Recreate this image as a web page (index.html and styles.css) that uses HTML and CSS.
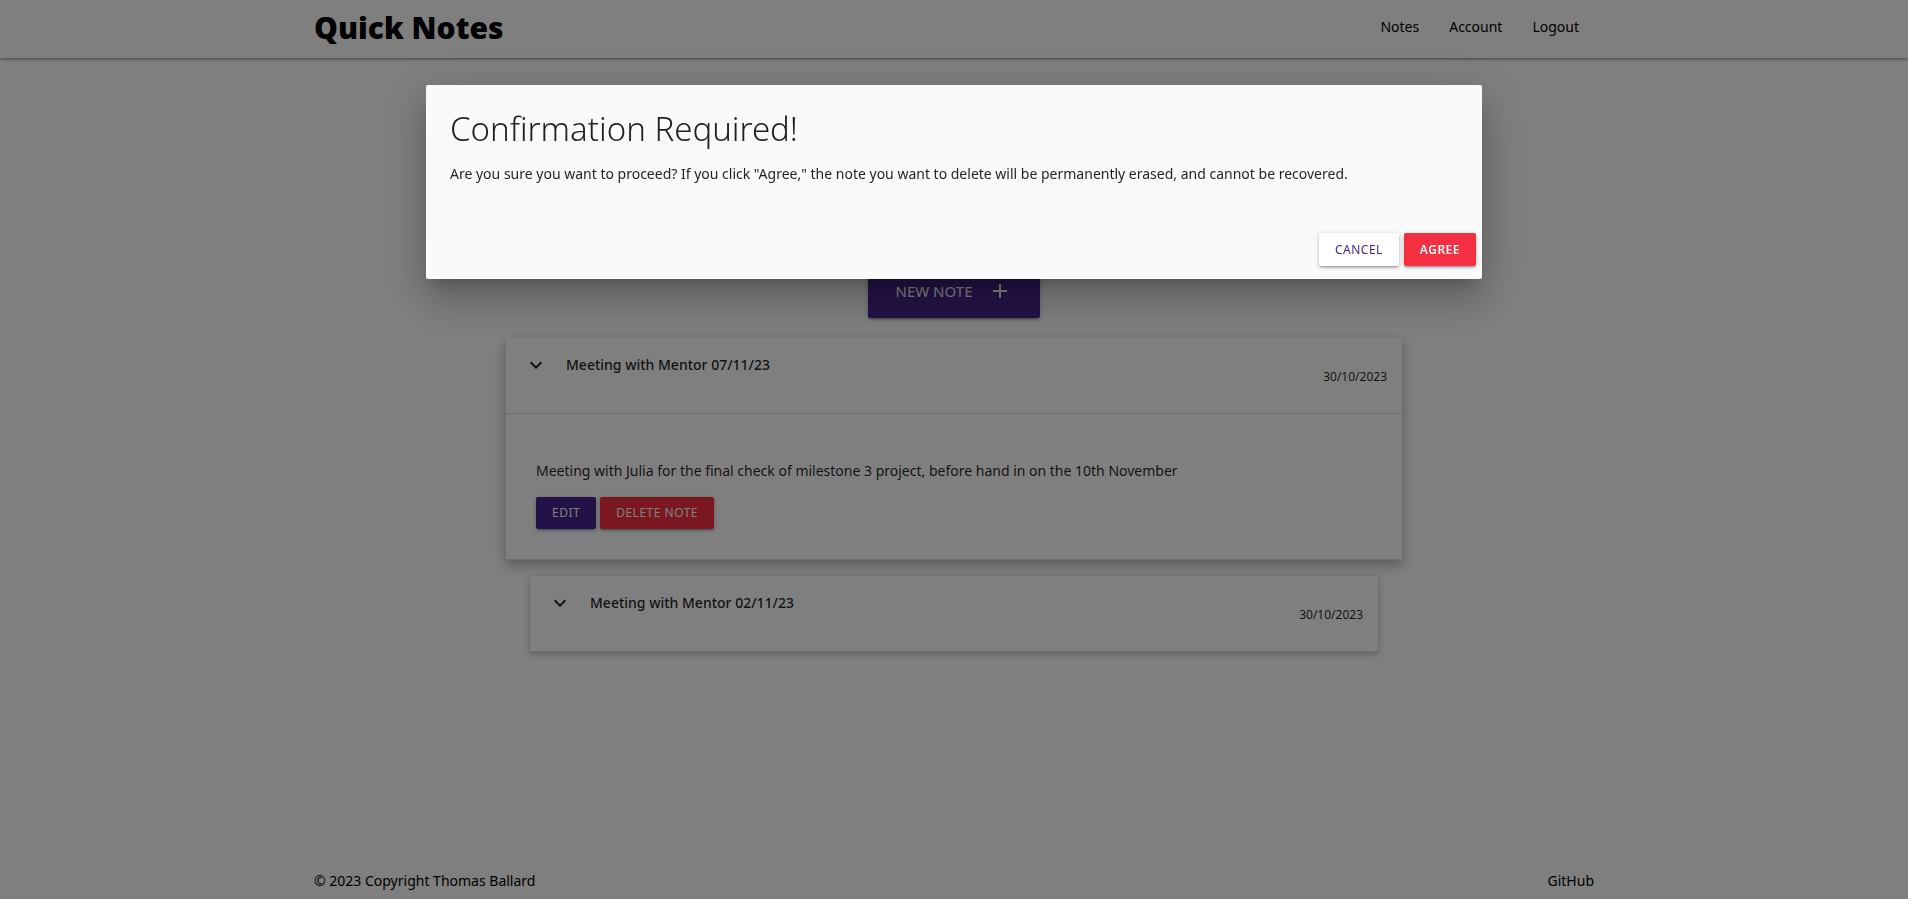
FILE: index.html
```html
<!DOCTYPE html>
<html lang="en">
<head>
<meta charset="utf-8">
<meta name="viewport" content="width=device-width, initial-scale=1">
<title>Quick Notes</title>
<link rel="stylesheet" href="styles.css">
</head>
<body>
<header class="navbar">
  <div class="container navbar-inner">
    <a class="brand" href="#">Quick Notes</a>
    <nav>
      <ul class="nav-links">
        <li><a href="#">Notes</a></li>
        <li><a href="#">Account</a></li>
        <li><a href="#">Logout</a></li>
      </ul>
    </nav>
  </div>
</header>
<main class="container">
  <div class="actions">
    <button class="btn btn-large btn-primary" type="button">New note
      <svg class="icon" viewBox="0 0 24 24" aria-hidden="true"><path d="M19 13h-6v6h-2v-6H5v-2h6V5h2v6h6v2z"/></svg>
    </button>
  </div>
  <ul class="notes">
    <li class="note note-open">
      <div class="note-header">
        <svg class="icon" viewBox="0 0 24 24" aria-hidden="true"><path d="M7.41 8.59L12 13.17l4.59-4.58L18 10l-6 6-6-6z"/></svg>
        <span class="note-title">Meeting with Mentor 07/11/23</span>
        <time class="note-date" datetime="2023-10-30">30/10/2023</time>
      </div>
      <div class="note-body">
        <p>Meeting with Julia for the final check of milestone 3 project, before hand in on the 10th November</p>
        <div class="note-buttons">
          <button class="btn btn-primary" type="button">Edit</button>
          <button class="btn btn-danger" type="button">Delete note</button>
        </div>
      </div>
    </li>
    <li class="note">
      <div class="note-header">
        <svg class="icon" viewBox="0 0 24 24" aria-hidden="true"><path d="M7.41 8.59L12 13.17l4.59-4.58L18 10l-6 6-6-6z"/></svg>
        <span class="note-title">Meeting with Mentor 02/11/23</span>
        <time class="note-date" datetime="2023-10-30">30/10/2023</time>
      </div>
    </li>
  </ul>
</main>
<footer class="container footer">
  <span>© 2023 Copyright Thomas Ballard</span>
  <a href="#">GitHub</a>
</footer>
<div class="overlay">
  <section class="modal" role="dialog" aria-modal="true" aria-labelledby="confirm-title">
    <div class="modal-content">
      <h4 id="confirm-title">Confirmation Required!</h4>
      <p>Are you sure you want to proceed? If you click "Agree," the note you want to delete will be permanently erased, and cannot be recovered.</p>
    </div>
    <div class="modal-footer">
      <button class="btn btn-plain" type="button">Cancel</button>
      <button class="btn btn-danger btn-strong" type="button">Agree</button>
    </div>
  </section>
</div>
</body>
</html>
```
FILE: styles.css
```css
* { box-sizing: border-box; }

body {
  margin: 0;
  min-height: 100vh;
  display: flex;
  flex-direction: column;
  background: #fff;
  color: rgba(0, 0, 0, 0.87);
  font: 400 14px/24px "Noto Sans", "Open Sans", sans-serif;
}

a { color: #000; text-decoration: none; }
ul { list-style: none; margin: 0; padding: 0; }
p { margin: 0; }

.container { width: 90%; max-width: 1280px; margin: 0 auto; }

.navbar {
  background: #fff;
  box-shadow: 0 2px 2px 0 rgba(0, 0, 0, 0.14), 0 3px 1px -2px rgba(0, 0, 0, 0.12), 0 1px 5px 0 rgba(0, 0, 0, 0.2);
}
.navbar-inner { display: flex; justify-content: space-between; height: 58px; line-height: 54px; }
.brand { font-family: "Open Sans", sans-serif; font-size: 30px; font-weight: 800; line-height: 56px; }
.nav-links { display: flex; }
.nav-links a { display: block; padding: 0 15px; }

main { flex: 1; padding-top: 206px; }
.actions { display: flex; justify-content: center; margin-bottom: 20px; }

.icon { width: 24px; height: 24px; fill: currentColor; flex: none; }

.btn {
  height: 32px;
  padding: 0 16px;
  border: 0;
  border-radius: 2px;
  color: #fff;
  font: inherit;
  font-size: 12px;
  letter-spacing: 0.5px;
  text-transform: uppercase;
  box-shadow: 0 2px 2px 0 rgba(0, 0, 0, 0.14), 0 3px 1px -2px rgba(0, 0, 0, 0.12), 0 1px 5px 0 rgba(0, 0, 0, 0.2);
  cursor: pointer;
}
.btn-large { display: flex; align-items: center; gap: 16px; height: 54px; padding: 0 28px; font-size: 15px; letter-spacing: 0; }
.btn-primary { background: #47258e; }
.btn-danger { background: #f42f42; }
.btn-plain { background: #fff; color: #47258e; }
.btn-strong { font-weight: 600; }

.notes { width: 70%; margin: 0 auto; }
.note {
  margin: 0 24px;
  background: #fff;
  box-shadow: 0 2px 5px 0 rgba(0, 0, 0, 0.16), 0 2px 10px 0 rgba(0, 0, 0, 0.12);
}
.note-open {
  margin: 0 0 16px;
  box-shadow: 0 5px 11px 0 rgba(0, 0, 0, 0.18), 0 4px 15px 0 rgba(0, 0, 0, 0.15);
}
.note-header { display: flex; height: 76px; padding: 15px; border-bottom: 1px solid #ddd; }
.note-header .icon { margin: 0 18px 0 3px; }
.note-title { font-weight: 500; }
.note-date { margin: 12px 0 0 auto; font-size: 12px; }
.note-body { padding: 45px 30px 30px; border-bottom: 1px solid #ddd; }
.note-buttons { display: flex; gap: 4px; margin-top: 14px; }

.footer { display: flex; justify-content: space-between; padding-bottom: 6px; }
.footer, .footer a { color: #000; }

.overlay { position: fixed; inset: 0; padding-top: 85px; background: rgba(0, 0, 0, 0.5); }
.modal {
  width: 90%;
  max-width: 1056px;
  margin: 0 auto;
  border-radius: 2px;
  background: #fafafa;
  box-shadow: 0 24px 38px 3px rgba(0, 0, 0, 0.14), 0 9px 46px 8px rgba(0, 0, 0, 0.12), 0 11px 15px -7px rgba(0, 0, 0, 0.2);
}
.modal-content { padding: 24px; }
.modal-content h4 { margin: 0 0 14px; font-size: 33px; line-height: 39px; font-weight: 300; }
.modal-footer { display: flex; justify-content: flex-end; gap: 5px; padding: 23px 6px 13px; }
.modal-footer .btn { height: 33px; }
```
